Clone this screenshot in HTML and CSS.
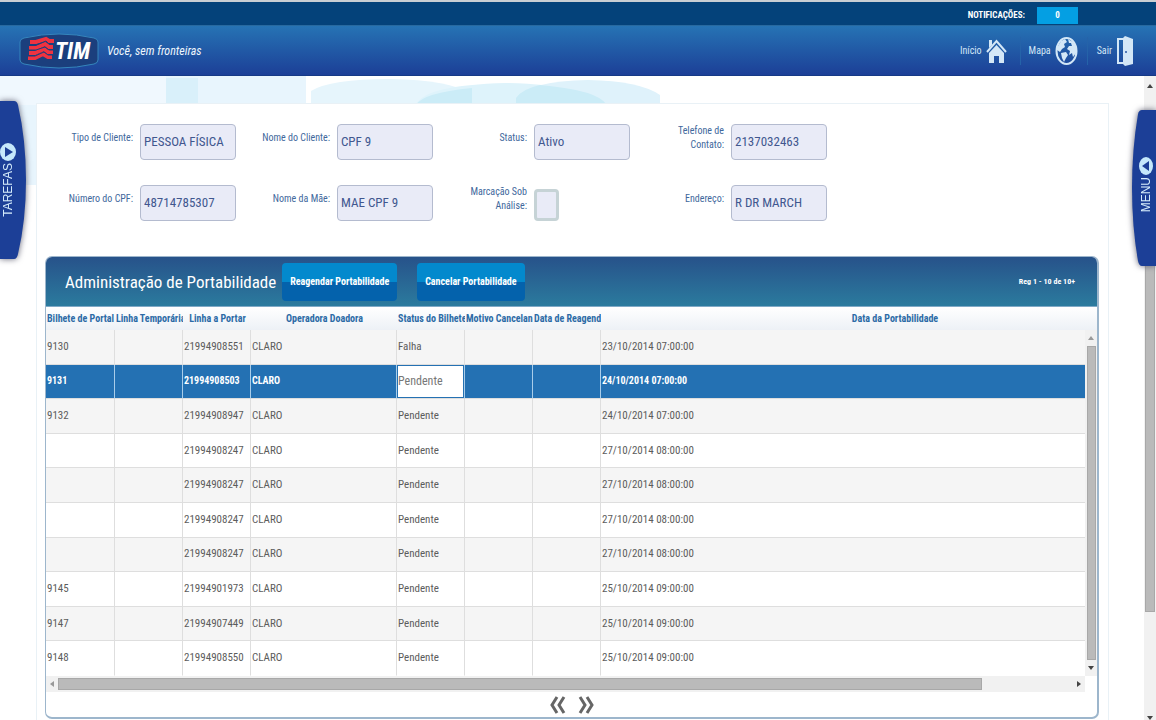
FILE: index.html
```html
<!DOCTYPE html>
<html lang="pt-BR">
<head>
<meta charset="utf-8">
<title>Administração de Portabilidade</title>
<link rel="stylesheet" href="styles.css">
</head>
<body>
<div class="notice-bar">
  <span class="notice-label">NOTIFICAÇÕES:</span>
  <button class="notice-count" type="button">0</button>
</div>
<header class="header">
  <div class="brand">
    <svg class="logo" width="80" height="36" viewBox="0 0 80 36" role="img" aria-label="TIM">
      <path d="M1 9Q1 6 5 5Q40-3 75 5Q79 6 79 9V27Q79 30 75 31Q40 39 5 31Q1 30 1 27Z" fill="#1b3f7d" stroke="#3586bd" stroke-width="1"/>
      <g fill="none" stroke="#ef3340" stroke-width="4">
        <path d="M11 9H17L27 6L30 8H35"/><path d="M10 15H17L26 11L30 14H34"/><path d="M10 20H16L25 16L29 19H34"/><path d="M9 25H16L24 21L29 24H33"/>
      </g>
      <path d="M10 12H17L27 8L30 11H35M9 17H17L26 14L30 17H34M9 23H16L25 19L29 22H34" fill="none" stroke="#1b3f7d" stroke-width="1"/>
      <text class="logo-text" x="36" y="26">TIM</text>
    </svg>
    <span class="slogan">Você, sem fronteiras</span>
  </div>
  <nav class="nav">
    <a class="nav-link" href="#">Início
      <svg width="21" height="26" viewBox="0 0 21 26"><path d="M1 14L10.500 3L20 14" fill="none" stroke="#d3e7f7" stroke-width="2"/><path d="M3 2H6V7L3 10ZM3 15L10.500 7L18 15V25H13V18H8V25H3Z" fill="#d3e7f7"/></svg></a>
    <a class="nav-link nav-map" href="#">Mapa
      <svg width="23" height="28" viewBox="0 0 23 28"><ellipse cx="11.500" cy="14" rx="10" ry="13" fill="none" stroke="#d3e7f7" stroke-width="2"/><path d="M2 11L6 4L10 2L12 5L9 7L10 10L7 12L5 15L2 13ZM6 16L11 15L13 18L11 21L9 25L7 21ZM13 2L18 5L21 10L21 16L18 20L17 16L14 18L15 14L12 12L14 9L17 9L16 6L14 6Z" fill="#d3e7f7"/></svg></a>
    <a class="nav-link" href="#">Sair
      <svg width="18" height="30" viewBox="0 0 18 30"><path d="M8 3H2V27H8" fill="none" stroke="#d3e7f7" stroke-width="2"/><path d="M7 2L9 0L17 3V28L9 30L7 28Z" fill="#d3e7f7"/><circle cx="10" cy="16" r="1" fill="#2857a3"/></svg></a>
  </nav>
</header>
<div class="page">
  <svg class="decor" width="670" height="110" viewBox="0 0 670 110" aria-hidden="true">
    <path d="M0 0H306V29H36V109H0Z" fill="#e8f5fd"/>
    <path d="M0 0H166V29H0Z" fill="#f0f8fe"/>
    <path d="M166 2H198V29H166Z" fill="#d9f0fa"/>
    <path d="M311 29V15Q330 3 390 3Q450 4 472 18V29Z" fill="#e6f5fc"/>
    <path d="M416 29Q424 9 506 7Q590 9 607 29Z" fill="#def3fb"/>
    <path d="M516 29V22Q530 5 588 4Q640 5 660 19V29Z" fill="#dff2fb"/>
    <path d="M416 29Q422 17 472 12V29ZM516 29V22Q522 13 540 9Q598 14 607 29Z" fill="#cbecf7"/>
  </svg>
  <main class="panel">
    <form class="fields">
      <div class="field"><label for="tipo">Tipo de Cliente:</label><input class="box" id="tipo" type="text" value="PESSOA FÍSICA" readonly></div>
      <div class="field"><label for="nome">Nome do Cliente:</label><input class="box" id="nome" type="text" value="CPF 9" readonly></div>
      <div class="field"><label for="status">Status:</label><input class="box" id="status" type="text" value="Ativo" readonly></div>
      <div class="field"><label for="fone">Telefone de<br>Contato:</label><input class="box" id="fone" type="text" value="2137032463" readonly></div>
      <div class="field"><label for="cpf">Número do CPF:</label><input class="box" id="cpf" type="text" value="48714785307" readonly></div>
      <div class="field"><label for="mae">Nome da Mãe:</label><input class="box" id="mae" type="text" value="MAE CPF 9" readonly></div>
      <div class="field"><label for="analise">Marcação Sob<br>Análise:</label><span class="check-slot"><input class="check" id="analise" type="checkbox"></span></div>
      <div class="field"><label for="end">Endereço:</label><input class="box" id="end" type="text" value="R DR MARCH" readonly></div>
    </form>
    <section class="grid-card">
      <div class="grid-head">
        <h1 class="grid-title">Administração de Portabilidade</h1>
        <button class="action" type="button">Reagendar Portabilidade</button>
        <button class="action" type="button">Cancelar Portabilidade</button>
        <span class="range">Reg 1 - 10 de 10+</span>
      </div>
      <div class="grid-body">
        <table class="table">
          <colgroup><col class="c-first"><col class="c-s"><col class="c-s"><col class="c-m"><col class="c-s"><col class="c-s"><col class="c-s"><col></colgroup>
          <thead><tr><th>Bilhete de Portal</th><th>Linha Temporária</th><th class="mid">Linha a Portar</th><th class="mid">Operadora Doadora</th><th>Status do Bilhete</th><th>Motivo Cancelan</th><th>Data de Reagend</th><th class="wide">Data da Portabilidade</th></tr></thead>
          <tbody>
            <tr><td>9130</td><td></td><td>21994908551</td><td>CLARO</td><td>Falha</td><td></td><td></td><td>23/10/2014 07:00:00</td></tr>
            <tr class="selected"><td>9131</td><td></td><td>21994908503</td><td>CLARO</td><td class="editing">Pendente</td><td></td><td></td><td>24/10/2014 07:00:00</td></tr>
            <tr><td>9132</td><td></td><td>21994908947</td><td>CLARO</td><td>Pendente</td><td></td><td></td><td>24/10/2014 07:00:00</td></tr>
            <tr><td></td><td></td><td>21994908247</td><td>CLARO</td><td>Pendente</td><td></td><td></td><td>27/10/2014 08:00:00</td></tr>
            <tr><td></td><td></td><td>21994908247</td><td>CLARO</td><td>Pendente</td><td></td><td></td><td>27/10/2014 08:00:00</td></tr>
            <tr><td></td><td></td><td>21994908247</td><td>CLARO</td><td>Pendente</td><td></td><td></td><td>27/10/2014 08:00:00</td></tr>
            <tr><td></td><td></td><td>21994908247</td><td>CLARO</td><td>Pendente</td><td></td><td></td><td>27/10/2014 08:00:00</td></tr>
            <tr><td>9145</td><td></td><td>21994901973</td><td>CLARO</td><td>Pendente</td><td></td><td></td><td>25/10/2014 09:00:00</td></tr>
            <tr><td>9147</td><td></td><td>21994907449</td><td>CLARO</td><td>Pendente</td><td></td><td></td><td>25/10/2014 09:00:00</td></tr>
            <tr><td>9148</td><td></td><td>21994908550</td><td>CLARO</td><td>Pendente</td><td></td><td></td><td>25/10/2014 09:00:00</td></tr>
          </tbody>
        </table>
        <div class="vbar"><span class="arrow up faint"></span><span class="thumb"></span><span class="arrow down"></span></div>
      </div>
      <div class="hbar"><span class="arrow left faint"></span><span class="track"><span class="thumb"></span></span><span class="arrow right"></span></div>
      <div class="pager">
        <button class="page-btn" type="button" aria-label="Página anterior"><svg width="16" height="18" viewBox="0 0 16 18"><path d="M7 1L2 9L7 17M14 1L9 9L14 17"/></svg></button>
        <button class="page-btn" type="button" aria-label="Próxima página"><svg width="16" height="18" viewBox="0 0 16 18"><path d="M2 1L7 9L2 17M9 1L14 9L9 17"/></svg></button>
      </div>
    </section>
  </main>
  <div class="page-scroll"><span class="arrow up"></span><span class="thumb"></span><span class="arrow down"></span></div>
  <button class="tab tab-left" type="button">
    <svg class="tab-shape" viewBox="0 0 27 160"><path d="M0 1H14Q17 1 18 5Q26 40 26 80Q26 120 18 154Q17 159 14 159H0Z"/></svg>
    <svg class="tab-icon" width="16" height="18" viewBox="0 0 16 18"><ellipse cx="8" cy="9" rx="8" ry="9" fill="#c5e8fb"/><path d="M5 4L13 9L5 14Z" fill="#1c3f97"/></svg>
    <span class="tab-text">TAREFAS</span>
  </button>
  <button class="tab tab-right" type="button">
    <svg class="tab-shape" viewBox="0 0 25 158"><path d="M25 1H11Q8 1 7 5Q1 40 1 79Q1 118 7 152Q8 157 11 157H25Z"/></svg>
    <svg class="tab-icon" width="14" height="18" viewBox="0 0 14 18"><ellipse cx="7" cy="9" rx="7" ry="9" fill="#c5e8fb"/><path d="M10 4L3 9L10 14Z" fill="#1c3f97"/></svg>
    <span class="tab-text">MENU</span>
  </button>
</div>
</body>
</html>
```
FILE: styles.css
```css
* { box-sizing: border-box; }
body {
  margin: 0;
  height: 100vh;
  overflow: hidden;
  display: flex;
  flex-direction: column;
  background: #fff;
  font-family: "Roboto Condensed", "Arial Narrow", "Liberation Sans", sans-serif;
  font-size: 11px;
}
button, input { font-family: inherit; }
button { border: 0; padding: 0; cursor: pointer; }
svg { flex: none; display: block; }

.notice-bar {
  flex: none;
  display: flex;
  align-items: center;
  justify-content: flex-end;
  gap: 12px;
  height: 26px;
  padding: 3px 78px 0 0;
  border-top: 2px solid #c9ced3;
  border-bottom: 1px solid #28699f;
  background: #04427a;
  color: #fff;
  font-weight: bold;
  font-size: 9px;
}
.notice-count {
  width: 41px;
  height: 17px;
  background: #049fe3;
  color: #fff;
  font-size: 9px;
  font-weight: bold;
}

.header {
  flex: none;
  display: flex;
  align-items: center;
  justify-content: space-between;
  height: 50px;
  padding: 0 22px 0 19px;
  border-bottom: 1px solid #163a86;
  background: linear-gradient(#2673b4, #1c3f97);
}
.brand { display: flex; align-items: center; gap: 8px; }
.logo-text { font-size: 23px; font-weight: bold; font-style: italic; fill: #fff; }
.slogan { color: #eef6fd; font-size: 12px; font-style: italic; }
.nav { display: flex; align-items: center; }
.nav-link {
  display: flex;
  align-items: center;
  gap: 4px;
  height: 28px;
  color: #d3e7f7;
  font-size: 10px;
  text-decoration: none;
}
.nav-map {
  margin: 0 9px 0 13px;
  padding: 0 9px 0 8px;
  border: solid #2563a9;
  border-width: 0 1px;
}

.page { position: relative; flex: 1; min-height: 0; display: flex; align-items: flex-start; overflow: hidden; }
.decor { position: absolute; left: 0; top: 0; }
.panel {
  position: relative;
  flex: 1;
  min-width: 0;
  margin: 27px 35px 0 36px;
  padding: 20px 9px 20px 8px;
  border: 1px solid #e9f1f6;
  background: #fff;
}
.fields {
  display: grid;
  grid-template-columns: repeat(4, minmax(0, 197px));
  row-gap: 25px;
  margin: 0 0 35px -6px;
}
.field { display: flex; align-items: center; justify-content: flex-end; gap: 7px; }
.field label { padding-bottom: 8px; color: #41689c; font-size: 10px; line-height: 14px; text-align: right; white-space: nowrap; }
.box {
  width: 96px;
  height: 36px;
  padding: 0 3px 2px;
  border: 1px solid #b4bbcf;
  border-radius: 4px;
  background: #e9ebf7;
  color: #41578f;
  font-size: 13px;
}
.check-slot { width: 96px; display: flex; padding-top: 3px; }
.check {
  appearance: none;
  width: 25px;
  height: 32px;
  margin: 0;
  border: 3px solid #c6d3d6;
  border-radius: 4px;
  background: #e9ebf7;
}

.grid-card {
  border: 1px solid #9db6cc;
  border-width: 1px 2px 2px 1px;
  border-radius: 7px;
  background: #fff;
  overflow: hidden;
}
.grid-head {
  display: flex;
  align-items: center;
  height: 50px;
  padding: 0 22px 0 19px;
  border-bottom: 1px solid #7fa9c6;
  background: linear-gradient(#27528a, #2b7b9e);
  color: #fff;
}
.grid-title { margin: 0 6px 0 0; font-size: 17px; font-weight: normal; }
.action {
  height: 38px;
  margin-right: 20px;
  padding: 0 8px;
  border-radius: 4px;
  background: linear-gradient(#0389cd 50%, #0462ac 50%);
  color: #fff;
  font-size: 10px;
  font-weight: bold;
}
.range { margin-left: auto; font-size: 8px; font-weight: bold; }

.grid-body { display: flex; background: linear-gradient(#fff, #edf1f6 23px, #fff 23px); }
.table { flex: 1; width: 100%; min-width: 0; height: 369px; border-collapse: separate; border-spacing: 0; table-layout: fixed; }
.c-first { width: 69px; }
.c-s { width: 68px; }
.c-m { width: 146px; }
.table th {
  height: 23px;
  padding: 0 0 0 1px;
  color: #2c6ba6;
  font-weight: bold;
  font-size: 10px;
  text-align: left;
  white-space: nowrap;
  overflow: hidden;
}
.table th.mid { text-align: center; }
.table th.wide { padding-left: 104px; text-align: center; }
.table td {
  padding: 0 1px;
  border-right: 1px solid #dedede;
  border-bottom: 1px solid #dedede;
  color: #5c5c5c;
  line-height: 14px;
  white-space: nowrap;
}
.table td:last-child { border-right: 0; }
.table tbody tr:nth-child(odd) { background: #f5f5f5; }
.table tbody tr:last-child td { border-bottom-color: #fff; }
.table tbody tr.selected { background: #2471b3; }
.table tbody tr.selected td { color: #fff; font-size: 10px; font-weight: bold; border-right-color: #a9cdea; }
.table tbody tr.selected td.editing { background: #fff; color: #777; font-size: 12px; font-weight: normal; box-shadow: inset 0 0 0 1px #2471b3; }

.thumb { background: #bababa; border: 1px solid #a8a8a8; }
.arrow { flex: none; width: 0; height: 0; border: 3px solid transparent; }
.up { border-bottom: 4px solid #444; border-top: 0; }
.down { border-top: 4px solid #444; border-bottom: 0; }
.left { border-right: 4px solid #444; border-left: 0; }
.right { border-left: 4px solid #444; border-right: 0; }
.up.faint { border-bottom-color: #999; }
.left.faint { border-right-color: #999; }
.vbar {
  flex: none;
  display: flex;
  flex-direction: column;
  align-items: center;
  gap: 6px;
  width: 12px;
  margin-top: 23px;
  padding: 6px 0;
  background: #f1f1f1;
}
.vbar .thumb { flex: 1; width: 9px; }
.hbar { display: flex; align-items: center; gap: 4px; height: 16px; margin-right: 12px; padding: 0 4px; background: #f1f1f1; }
.track { flex: 1; display: flex; }
.hbar .thumb { width: 91%; height: 12px; }
.pager { display: flex; justify-content: center; align-items: center; gap: 12px; height: 25px; }
.page-btn { background: none; }
.page-btn path { fill: none; stroke: #666; stroke-width: 3; }

.page-scroll {
  flex: none;
  align-self: stretch;
  display: flex;
  flex-direction: column;
  align-items: center;
  width: 12px;
  padding: 8px 0 0;
  background: #f1f1f1;
}
.page-scroll .thumb { width: 10px; height: 78%; margin: 28px 0 auto; }

.tab {
  position: absolute;
  display: flex;
  flex-direction: column;
  align-items: center;
  background: none;
}
.tab-shape { position: absolute; inset: 0; width: 100%; height: 100%; fill: #1c3f97; filter: drop-shadow(0 0 3px #667); }
.tab-icon, .tab-text { position: relative; }
.tab-text { writing-mode: vertical-rl; rotate: 180deg; color: #d5ecfb; font-family: "Liberation Sans", sans-serif; font-size: 12px; line-height: 16px; }
.tab-left { left: 0; top: 24px; width: 27px; height: 160px; padding: 43px 11px 0 0; gap: 2px; }
.tab-right { right: 0; top: 33px; width: 25px; height: 158px; padding: 48px 0 0 5px; gap: 2px; }
```
